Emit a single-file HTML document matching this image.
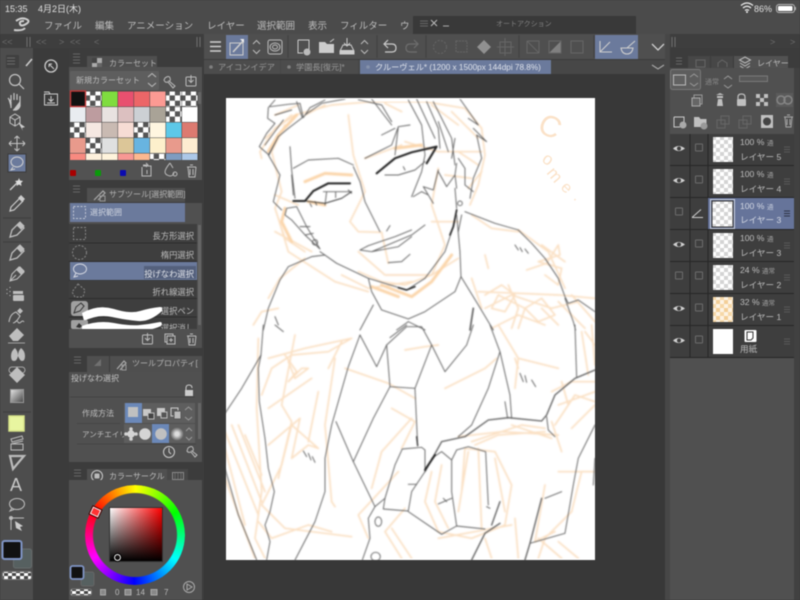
<!DOCTYPE html>
<html lang="ja"><head><meta charset="utf-8"><title>CLIP STUDIO PAINT</title>
<style>
html,body{margin:0;padding:0;width:800px;height:600px;overflow:hidden;background:#3a3a3a}
#w{position:relative;width:800px;height:600px;overflow:hidden;filter:blur(.4px)}
svg{position:absolute;left:0;top:0;font-family:"Liberation Sans","Noto Sans CJK JP",sans-serif}
.wheel{position:absolute;left:85px;top:485px;width:100px;height:100px;border-radius:50%;background:conic-gradient(from 301deg,#f00,#ff0,#0f0,#0ff,#00f,#f0f,#f00);-webkit-mask:radial-gradient(circle,transparent 41.5px,#000 42.5px);mask:radial-gradient(circle,transparent 41.5px,#000 42.5px)}
.sq{position:absolute;left:110px;top:508px;width:52px;height:53px;background:linear-gradient(to top,#000,rgba(0,0,0,0)),linear-gradient(to right,#fff,#f00);outline:1px solid #333}
.mk{position:absolute;left:91px;top:508px;width:7px;height:6px;background:#f33;border:1.5px solid #fff;outline:1px solid #400;transform:rotate(25deg)}
.cr{position:absolute;left:114px;top:554px;width:5px;height:5px;border-radius:50%;border:1px solid #fff;outline:1px solid #000}
</style></head><body><div id="w">
<svg width="800" height="600" viewBox="0 0 800 600" xmlns="http://www.w3.org/2000/svg">
<defs>
<filter id="b" x="0" y="0" width="100%" height="100%"><feGaussianBlur stdDeviation=".4"/></filter>
<filter id="b2" x="0" y="0" width="100%" height="100%"><feGaussianBlur stdDeviation=".7"/></filter>
<pattern id="c" width="10.6" height="10.6" patternUnits="userSpaceOnUse"><rect width="10.6" height="10.6" fill="#fff"/><rect width="5.3" height="5.3" fill="#555"/><rect x="5.3" y="5.3" width="5.3" height="5.3" fill="#555"/></pattern>
<pattern id="t" width="8" height="8" patternUnits="userSpaceOnUse"><rect width="8" height="8" fill="#fff"/><rect width="4" height="4" fill="#d4d4d4"/><rect x="4" y="4" width="4" height="4" fill="#d4d4d4"/></pattern>
<pattern id="o" width="8" height="8" patternUnits="userSpaceOnUse"><rect width="8" height="8" fill="#fdf3e4"/><rect width="4" height="4" fill="#f6d8a8"/><rect x="4" y="4" width="4" height="4" fill="#f3cf98"/></pattern>
<pattern id="s" width="8" height="6" patternUnits="userSpaceOnUse"><rect width="8" height="6" fill="#fff"/><rect width="4" height="3" fill="#444"/><rect x="4" y="3" width="4" height="3" fill="#444"/></pattern>
<linearGradient id="g" x1="0" y1="0" x2="1" y2="1"><stop offset="0" stop-color="#e8e8e8"/><stop offset="1" stop-color="#444"/></linearGradient>
<radialGradient id="r"><stop offset=".3" stop-color="#ddd"/><stop offset="1" stop-color="#666"/></radialGradient>
</defs>

<!-- base -->
<rect width="800" height="600" fill="#3c3c3c"/>
<rect width="800" height="34" fill="#4b4b4b"/>
<rect y="34" width="800" height="14" fill="#3e3e3e"/>
<rect y="48" width="33" height="552" fill="#4d4d4d"/>
<rect x="33" y="48" width="36" height="552" fill="#3b3b3b"/>
<rect x="204" y="74" width="461" height="526" fill="#383838"/>
<rect x="665" y="34" width="5" height="566" fill="#474747"/>

<!-- status -->
<text x="5" y="12" font-size="9" fill="#e0e0e0">15:35</text>
<text x="38" y="12" font-size="9" fill="#e0e0e0">4月2日(木)</text>
<path d="M741 5.500q6-5 12 0M743 8q4-3.500 8 0M745 10.500q2-1.500 4 0" stroke="#eee" stroke-width="1.300" fill="none"/><circle cx="747" cy="12" r="1" fill="#eee"/>
<text x="754" y="12" font-size="9" fill="#e0e0e0">86%</text>
<rect x="776.500" y="4.500" width="18" height="8" rx="2.500" fill="none" stroke="#bbb"/><rect x="778" y="6" width="14.500" height="5" rx="1" fill="#fff"/><rect x="795" y="7" width="1" height="3" fill="#aaa"/>

<!-- menu -->
<path d="M16 21q5-4 10-2t0 5q-5 3-6 0t4-3 M14 30q9 1 11-2" stroke="#d0d0d0" stroke-width="2" fill="none"/>
<g font-size="9.500" fill="#bdbdbd"><text x="44" y="29">ファイル</text><text x="95" y="29">編集</text><text x="127" y="29">アニメーション</text><text x="207" y="29">レイヤー</text><text x="257" y="29">選択範囲</text><text x="308" y="29">表示</text><text x="340" y="29">フィルター</text><text x="400" y="29">ウ</text></g>

<!-- auto action palette -->
<rect x="413" y="16" width="223" height="18" fill="#393939"/>
<path d="M420 21h8M420 23.500h8M420 26h8" stroke="#666"/>
<path d="M431 20l6 6M437 20l-6 6" stroke="#bbb" stroke-width="1"/><path d="M443 26h6" stroke="#aaa"/>
<text x="496" y="26" font-size="7" fill="#808080">オートアクション</text>

<!-- strip chevrons -->
<g font-size="9" fill="#6c6c6c"><text x="2" y="45">&lt;&lt;</text><text x="36" y="45">&lt;&lt;</text><text x="59" y="45">&gt;</text><text x="70" y="45">&lt;&lt;</text><text x="94" y="45">&lt;</text><text x="770" y="45">&gt;</text><text x="790" y="45">&gt;</text></g>
<path d="M27 37v10M30 37v10M197 37v10M200 37v10M672 37v10M675 37v10" stroke="#707070"/>

<!-- toolbar -->
<rect x="204" y="34" width="461" height="25" fill="#4f4f4f"/>
<path d="M210 42h11M210 46.500h11M210 51h11" stroke="#d0d0d0" stroke-width="1.500"/>
<rect x="226" y="35" width="22" height="24" fill="#6b7a9c"/>
<rect x="230" y="43" width="13" height="12" fill="none" stroke="#ccc"/><path d="M233 52l10-11" stroke="#ccc" stroke-width="1.600"/><path d="M240 39h4v4z" fill="#eee"/>
<path d="M253 44l3.500-3.500 3.500 3.500M253 50l3.500 3.500 3.500-3.500" stroke="#bbb" fill="none"/>
<rect x="268" y="40" width="14" height="14" rx="2" fill="none" stroke="#bbb"/><ellipse cx="275" cy="47" rx="5" ry="4" fill="none" stroke="#bbb"/><ellipse cx="275" cy="47" rx="2.500" ry="2" fill="none" stroke="#bbb"/>
<path d="M288 35v23M377 35v23M426 35v23M519 35v23M594 35v23" stroke="#3f3f3f"/>
<path d="M298 40h11v10M298 40v13h5" fill="none" stroke="#ccc"/><circle cx="307" cy="52" r="3.500" fill="#bbb"/>
<path d="M319 42h6l2 2h7v9h-15z" fill="#ccc"/><path d="M330 42l4-3" stroke="#ccc"/>
<path d="M347 38v8M344 43l3 3 3-3M340 51l3-6h8l3 6v3h-14z" fill="none" stroke="#ccc"/><rect x="340" y="50" width="14" height="4" fill="#ccc"/>
<path d="M361 44l3.500-3.500 3.500 3.500M361 50l3.500 3.500 3.500-3.500" stroke="#bbb" fill="none"/>
<path d="M385 44h7q4 0 4 4t-4 4h-7M388 40l-4 4 4 4" fill="none" stroke="#ccc" stroke-width="1.200"/>
<path d="M417 44h-7q-4 0-4 4t4 4h7M414 40l4 4-4 4" fill="none" stroke="#6e6e6e" stroke-width="1.200"/>
<g fill="none" stroke="#666"><circle cx="440" cy="47" r="6.500" stroke-dasharray="2 1.500"/><rect x="456" y="41" width="11" height="11" stroke-dasharray="2 1"/><rect x="500" y="42" width="11" height="11"/><path d="M505 38v18M497 47h17"/><path d="M527 41l12 12M527 41v12h12M527 41h12v12"/><rect x="571" y="41" width="12" height="12"/></g>
<path d="M484 40l7 7-7 7-7-7z" fill="#909090"/><path d="M549 53l12-12v12z" fill="#808080"/><rect x="549" y="41" width="12" height="12" fill="none" stroke="#666"/>
<rect x="595" y="35" width="43" height="24" fill="#6b7a9c"/>
<path d="M600 41v11h12M600 52l10-10" fill="none" stroke="#ccc" stroke-width="1.100"/>
<path d="M621 48h12q-1 6-6 6t-6-6zM627 48l8-7" fill="none" stroke="#ccc" stroke-width="1.100"/>
<path d="M652 44l6 6 6-6" fill="none" stroke="#d0d0d0" stroke-width="1.300"/>

<!-- document tabs -->
<rect x="204" y="60" width="461" height="14" fill="#474747"/>
<rect x="204" y="60" width="76" height="14" fill="#4c4c4c"/>
<rect x="281" y="60" width="77" height="14" fill="#4c4c4c"/>
<rect x="360" y="60" width="191" height="14" fill="#6b7a9c"/>
<circle cx="211" cy="67" r="1.800" fill="#808080"/><circle cx="289" cy="67" r="1.800" fill="#808080"/><circle cx="368" cy="67" r="1.800" fill="#8591ab"/>
<g font-size="8.200"><text x="218" y="70" fill="#999">アイコンイデア</text><text x="296" y="70" fill="#999">学園長[復元]*</text><text x="375" y="70" fill="#dde1ea">クルーヴェル* (1200 x 1500px 144dpi 78.8%)</text></g>
<path d="M652 65l6 4 6-4" fill="none" stroke="#aaa" stroke-width="1.100"/>

<!-- canvas -->
<rect x="226" y="98" width="369" height="462" fill="#fff"/>
<svg x="226" y="98" width="369" height="462" viewBox="226 98 369 462" style="position:static" overflow="hidden">
<g fill="none" stroke-linecap="round" stroke-linejoin="round">
<g filter="url(#b2)">
<!-- top sketch -->
<g transform="translate(225,95) scale(.3333)" stroke="#fbe0c3" stroke-width="5">
<path d="M110,190 L105,170 L150,100 L210,60 L320,30 L440,20 L600,20 L720,40 L770,100 L780,180 L760,270 L735,330"/>
<path d="M180,90 L140,170 L170,290 L150,340 L180,430 L240,470"/>
<path d="M370,60 L385,180 L420,290 L375,380 L400,410 L470,412 L490,505"/>
<path d="M640,220 L620,330 L660,450 L620,540 L540,570 L470,560 L400,530"/>
<path d="M400,470 L480,540 L620,540 L700,490"/>
<path d="M160,370 L190,470 L330,560 L430,590 M350,540 L430,580 L560,560"/>
<path d="M130,610 L165,550 L240,490 M85,690 L110,650 L160,640"/>
<path d="M740,360 L800,400 L880,410 M740,550 L770,640 M760,590 L1000,600 L1110,610"/>
<path d="M780,600 L830,570 L870,600 L840,650 L800,640 L820,600 L900,640 L950,610 L990,660 L940,680 L900,640 L880,700"/>
<path d="M850,570 L880,640 L860,700 M950,640 L1000,690 M1040,600 L1110,680 M1000,620 L1080,700 M780,640 L860,600 L980,640 L1060,620 M800,700 L880,660 L960,690"/>
<path d="M905,525 L965,505 L1000,450 L1005,480 L940,500 L1010,520 L1000,570 L960,540 M950,450 L1020,500"/>
<path d="M780,480 L790,520 M880,405 L970,470 L1020,580 M120,130 L200,60 M150,60 L220,30 M300,30 L240,60 M480,25 L530,50 M620,30 L700,90 M680,50 L760,130 M700,170 L760,210 M640,170 L770,170 M660,240 L740,250 M730,280 L770,230"/>
<path d="M150,300 L220,330 M150,410 L260,470 M620,380 L700,380 M540,140 L640,170 M420,190 L530,150"/>
</g>
<g transform="translate(225,95) scale(.3333)" stroke="#fbd6ac" stroke-width="9">
<path d="M130,170 L160,120 L215,60 M240,260 L300,235 L380,240 M510,160 L590,150 M250,320 L300,330 M180,340 L170,380 L200,440 M470,570 L560,605 L620,560 L680,480 M440,575 L520,605"/>
</g>
<!-- bottom sketch -->
<g transform="translate(225,325) scale(.3333)" stroke="#fbe0c3" stroke-width="5">
<path d="M100,40 L95,250 L110,500 L90,640 L120,700 M210,30 L170,240 L200,290 L160,460"/>
<path d="M130,100 L240,70 L380,40 L310,80 L200,90 L140,130 L110,210 M180,90 L215,140 L190,170 L230,130 L250,130 L210,160 L190,110"/>
<path d="M130,360 L225,280 L200,400 L250,360 L280,370 L200,300 L170,420 L110,540 L180,610 L380,635"/>
<path d="M0,320 L100,570 M20,300 L110,530 M40,300 L120,500 M60,330 L110,450 M0,370 L60,600 M0,460 L90,700 M130,250 L260,160 M280,200 L250,350 M310,130 L350,50"/>
<path d="M100,590 L140,640 L250,600 L320,620 M330,100 L300,300 L320,530"/>
<path d="M360,130 L490,175 L570,220 M660,190 L780,130 L815,100 M820,0 L880,100 L870,190 M880,100 L1000,130 M870,100 L880,130"/>
<path d="M540,75 L600,65 L640,60 M500,250 L570,290 L530,370 M560,280 L470,380 L440,490 M520,440 L400,570 L430,640"/>
<path d="M700,335 L830,320 L1000,330 M750,360 L820,330 L960,320 M740,350 L890,300 L960,310 M980,290 L990,320 L1010,380 M860,300 L980,340"/>
<path d="M620,440 L600,530 L640,620 L740,640 L840,600 L860,480 L810,380 L720,370 L710,500 M650,420 L630,530 L670,610 M730,380 L700,560 M760,370 L770,610 M810,400 L840,560 M640,640 L860,600"/>
<path d="M540,550 L480,620 L530,700 M500,610 L560,700 M780,640 L800,700 M870,580 L880,700 M960,480 L930,650 L990,620 M1110,440 L1070,440 L1040,560 L960,640 L940,700 M1000,650 L1060,700 M1110,200 L1000,240 M1110,240 L1040,310 M1070,20 L1090,150 M1100,0 L1110,120"/>
<path d="M980,200 L1040,170 L1110,170 M990,300 L1050,210 L1110,230 M320,530 L330,545 M940,640 L1010,700 M1080,20 L1110,60 M1010,170 L1030,240 M1000,440 L1100,440"/>
</g>
</g>
<g fill="#fbe2c8" stroke="none" font-size="20">
<text transform="translate(536,131) rotate(25)" font-size="30" font-family="Liberation Sans">C</text>
<text transform="translate(541,161) rotate(35)" font-size="17">o</text>
<text transform="translate(546,173) rotate(50)" font-size="17">m</text>
<text transform="translate(560,188) rotate(45)" font-size="16">e</text>
<text transform="translate(573,199) rotate(40)" font-size="14">.</text>
</g>
<g filter="url(#b)">
<!-- top line art -->
<g transform="translate(225,95) scale(.3333)" stroke="#626262" stroke-width="2.800">
<path d="M150,15 L130,38 L128,70 L150,85 L125,115 L103,155 L132,180 L160,125 L190,100 L232,68"/>
<path d="M135,35 L190,28 L225,25 L235,68 L255,38 L300,15 M232,68 L215,20 M240,60 L290,25 L360,12 M150,60 L200,45 M120,150 L175,75 M400,14 L470,30 L500,80"/>
<path d="M160,125 L130,180 L165,240 L145,320 L170,345 M195,155 L200,225 L210,310 M200,240 L205,300"/>
<path d="M205,220 L250,195 L340,190 L385,210 M420,190 L500,150 L520,95 L555,90 M470,120 L510,100 M520,95 L510,180"/>
<path d="M440,12 L500,90 M550,15 L590,90 L600,180 L590,230 L560,305 M575,12 L630,130 M605,20 L640,100 L645,160 M640,80 L670,170 M625,20 L680,130 L690,210"/>
<path d="M705,12 L760,90 L730,70 M745,100 L785,140 L755,120 L770,190 L745,250 L735,310 M680,190 L690,130"/>
<path d="M640,225 L625,285 L595,275 L610,300 L590,290 L565,305 M610,300 L625,325 M640,230 L665,275 L690,240 L695,280"/>
<path d="M695,205 L690,240 M700,190 L720,220 L720,270 L745,290 M690,280 L695,340"/>
<path d="M385,215 L405,260 L420,320 L465,410 M495,392 L485,408"/>
<path d="M405,465 L440,470 L500,445 L560,420 L600,390 M405,465 L430,452 L510,425 L560,405 M440,470 L520,455 L560,425 M490,503 L530,500 L555,478"/>
<path d="M285,470 L335,505 L430,550 L545,585 L600,550 L660,470 L680,410"/>
<path d="M180,360 L185,340 L215,335 L245,395 L275,445 L285,462 L240,420 L200,375 Z M225,395 L255,395 M240,420 L265,415"/>
<circle cx="270" cy="442" r="8"/><circle cx="705" cy="325" r="7"/>
<path d="M695,360 L705,470 L708,545 L690,590 L600,650 L550,672 L470,645 L440,590 L430,550"/>
<path d="M708,545 L760,630 L805,705 M550,680 L515,705 M550,680 L600,705 M445,630 L405,705"/>
<path d="M720,350 L810,385 L880,405 L920,445 L960,490 L1000,550 L1020,605 L1030,625 L1060,615 L1110,650 M1020,610 L1045,680 L1052,705"/>
<path d="M870,450 L880,465 M885,458 L892,470 M900,462 L910,475 M300,480 L260,485 L190,515 L165,555 L130,640 L115,705 M150,665 L160,690 M710,360 L700,410 M260,335 L255,325 M275,330 L270,320 M380,295 L370,285"/>
<path d="M745,640 L735,705" stroke-width="5"/>
<path d="M295,290 L380,290 M305,290 L300,330 M332,292 L332,308"/>
<path d="M480,240 L520,240 L570,225 L600,200 M535,215 L540,225"/>
</g>
<!-- thick blacks -->
<g transform="translate(225,95) scale(.3333)" stroke="#222">
<path d="M205,318 L240,318 L265,288 L310,265 L375,265" stroke-width="6"/>
<path d="M240,318 L300,325 L350,310 L380,290" stroke-width="2.500"/>
<path d="M455,235 L510,190 L560,172 L635,155 L605,205" stroke-width="6"/>
<path d="M695,345 L685,395 L675,420" stroke-width="5"/>
<path d="M520,578 L545,585 L570,575" stroke-width="4.500"/>
</g>
<!-- bottom line art -->
<g transform="translate(225,325) scale(.3333)" stroke="#626262" stroke-width="2.800">
<path d="M115,0 L108,90 L100,130 L103,230 L120,340 L130,430 L148,500 L135,560 L120,600 L135,650 L125,705"/>
<path d="M108,90 L50,190 L0,265 M0,430 L40,570 L95,705 M150,0 L175,20"/>
<path d="M405,30 L455,125 L485,60 L545,5 L590,5 L620,60 L660,140 L725,60 L745,0 M495,38 L545,0"/>
<path d="M405,30 L370,125 L340,230 L320,300 L300,400 L300,500 L270,590 L210,705"/>
<path d="M485,60 L495,185 L570,190 L620,60 M495,185 L445,280 L385,410 M570,190 L578,360"/>
<path d="M333,290 L385,410 L450,545 L480,520 M450,545 L430,580 L435,640 L412,705"/>
<ellipse cx="460" cy="590" rx="10" ry="14"/><ellipse cx="452" cy="695" rx="14" ry="13"/>
<path d="M795,0 L825,80 L855,210 L860,280 M825,80 L790,190 L740,300 L700,335 M840,230 L848,280"/>
<path d="M1050,0 L1055,155"/>
<path d="M965,275 L970,315 L990,335"/>
<path d="M475,552 L480,520 L510,420 L532,372 L590,367 L600,375 L600,440 M475,552 L550,558 L560,500 L600,440 M550,560 L650,628 L695,603 L780,612"/>
<path d="M620,400 L650,380 L680,405 L680,500 L695,603 M680,405 L695,375 L730,365 L782,380 L790,540 M640,537 L680,520 M655,520 L665,530 M785,545 L795,550 M550,478 L575,478"/>
<path d="M885,145 L895,170 M900,152 L905,172 M920,165 L932,185 M235,378 L245,395 M250,385 L258,405 M262,395 L270,412"/>
<path d="M1110,300 L1060,400 L1045,480 L1020,625 L915,655 M1110,400 L1105,480 M960,520 L1010,500"/>
<path d="M600,440 L650,350 L720,335 L790,285 L850,278 L950,288 L965,270 L990,210 L1050,160 L1110,135" stroke-width="4"/>
<path d="M950,520 L915,655 L900,705 M740,705 L780,625 L825,595 M825,530 L800,600" stroke-width="4"/>
<path d="M600,435 L630,390" stroke-width="6" stroke="#222"/><path d="M575,335 L578,362" stroke-width="4" stroke="#333"/>
</g>
</g>
</g>
</svg>

<!-- LEFT TOOLS -->
<rect x="6" y="55" width="13" height="13" fill="#404040"/><path d="M7 58h8M7 61h8M7 64h8" stroke="#6a6a6a"/>
<rect x="19" y="56" width="14" height="12" fill="#4d4d4d"/><path d="M26 66l6-7" stroke="#ccc" stroke-width="1.600"/>
<g fill="none" stroke="#c4c4c4" stroke-width="1.200">
<circle cx="15" cy="80" r="5.500"/><path d="M19 84l5 5"/>
<path d="M11 108v-6l-3-4M11 101v-6M14 100v-7M17 100v-6M20 101v-5M20 101v5q-1 3-4 4h-3" fill="#c4c4c4"/>
<path d="M10 117l5-3 5 3v6l-5 3-5-3zM10 117l5 3 5-3M15 120v6" stroke-width="1"/><path d="M18 122l7 5-3 1 1 3z" fill="#ccc" stroke="none"/>
<path d="M17 136v15M9 143.500h16M17 136l-2.500 2.500M17 136l2.500 2.500M17 151l-2.500-2.500M17 151l2.500-2.500M9 143.500l2.500-2.500M9 143.500l2.500 2.500M25 143.500l-2.500-2.500M25 143.500l-2.500 2.500" stroke-width="1"/>
</g>
<rect x="8" y="154" width="18" height="18" fill="#6b7a9c" stroke="#3b3b3b"/>
<ellipse cx="17" cy="162" rx="6" ry="5" fill="none" stroke="#d0d0d0"/><path d="M13 167l-2 3 4-1" fill="none" stroke="#d0d0d0"/>
<path d="M10 190l9-9" stroke="#ccc" stroke-width="1.300"/><path d="M19 178l1 2.500 3 .500-2 2 .500 3-2.500-1.500-2.500 1.500.5-3-2-2 3-.5z" fill="#ddd"/>
<path d="M10 211l1-4 9-9 3 3-9 9z" fill="none" stroke="#ccc" stroke-width="1.200"/><path d="M18 198l3-3 4 4-3 3z" fill="#ccc"/>
<path d="M3 218h28M3 242h28M3 412h28" stroke="#3d3d3d"/>
<g fill="#bebebe" stroke="#bebebe">
<path d="M10 237l2-7 7-7 5 5-7 7z" fill="none" stroke-width="1.300"/><path d="M17 225l3-3 4 4-3 3z"/>
<path d="M10 260l2-7 7-7 5 5-7 7z" fill="none" stroke-width="1.300"/><path d="M17 248l3-3 4 4-3 3z"/>
<path d="M10 281l2-7 7-7 5 5-7 7zM10 281l6-6" fill="none" stroke-width="1.100"/><path d="M17 270l3-3 4 4-3 3z"/>
<rect x="13" y="291" width="10" height="3" stroke="none"/><rect x="13" y="295" width="11" height="6" stroke="none" rx="1"/><path d="M10 287v1M7 289v1M10 291v1M7 293v1M10 295v1" stroke-width="1"/>
<path d="M9 322q1-8 7-10l4 4q-4 7-7 7" fill="none" stroke-width="1.100"/><path d="M17 311l3-3 3 3-3 3z" stroke="none"/><path d="M15 322q2-2 3 0t3 0 3 0" fill="none"/>
<path d="M9 336l8-8 7 7-6 6h-5z" stroke="none"/><path d="M8 343h17" stroke-width=".8"/>
<path d="M11 356q0-5 4-8 3 3 3 8-1 5-4 5-3 0-3-5zM18 356q0-5 3-8 4 3 4 8t-3 5q-2 0-4-5z" stroke="none"/>
<path d="M9 375l8-8 8 8-8 8z" stroke="none"/><rect x="9" y="367" width="16" height="6" rx="3" fill="none" stroke-width=".8"/>
</g>
<rect x="10.500" y="389.500" width="13" height="13" fill="url(#g)" stroke="#999"/>
<rect x="9" y="416" width="15" height="15" fill="#e8f5a0" stroke="#d7e38a" stroke-width="1.500"/>
<path d="M11 439l11-3 1 3-11 3zM11 444h12v6H11zM11 444l12-3" fill="none" stroke="#bbb"/>
<path d="M10 456h14l-11 13z" fill="none" stroke="#bbb" stroke-width="2.200"/>
<text x="10" y="491" font-size="18" fill="#c8c8c8">A</text>
<ellipse cx="17" cy="504" rx="7.500" ry="5.500" fill="none" stroke="#bbb" stroke-width="1.100"/><path d="M12 508l-2 3 4-1.500" fill="none" stroke="#bbb"/>
<path d="M11 518v12M11 518h13" stroke="#bbb"/><circle cx="11" cy="518" r="2" fill="#bbb"/><path d="M15 521l8 5-3 1 2 4-6-3z" fill="#ccc"/>
<rect x="13.500" y="549" width="18" height="19" rx="2" fill="#566060" stroke="#666c6c"/>
<rect x="2.500" y="541" width="19" height="18" rx="2" fill="#111" stroke="#7f94c4" stroke-width="2"/>
<rect x="2.500" y="571.500" width="29" height="8" rx="2" fill="url(#s)" stroke="#777"/>

<!-- second column icons -->
<circle cx="51" cy="66" r="6" fill="none" stroke="#ccc" stroke-width="1.300"/><path d="M49 64l5 5M49 64v3M49 64h3" stroke="#ccc"/>
<rect x="44.500" y="94" width="13" height="11" fill="none" stroke="#ccc"/><path d="M44 92h5l1 2" stroke="#ccc" fill="none"/><path d="M51 96v5M48.500 99l2.500 2.500 2.500-2.500M47 103h8" stroke="#ccc" fill="none"/>

<!-- COLOR SET -->
<rect x="69" y="48" width="133" height="20" fill="#3c3c3c"/>
<path d="M73 57h7M73 60h7M73 63h7M73 54h7" stroke="#666"/>
<rect x="87" y="56" width="70" height="12" fill="#4f4f4f"/>
<rect x="92" y="58" width="10" height="10" fill="#aaa"/><rect x="92" y="58" width="5" height="5" fill="#444"/><rect x="97" y="63" width="5" height="5" fill="#666"/>
<text x="109" y="66" font-size="8" fill="#b4b4b4">カラーセット</text>
<rect x="69" y="67" width="133" height="113" fill="#525252"/>
<rect x="70" y="71" width="89" height="19" rx="1" fill="#5e5e5e"/>
<text x="76" y="83" font-size="8" fill="#bcbcbc">新規カラーセット</text>
<path d="M148 77l4-3.500 4 3.500M148 83l4 3.500 4-3.500" fill="none" stroke="#bbb"/>
<path d="M165 78q4-3 5 0t-1 3l6 5-2 2-5-6q-3 1-4-2z" fill="none" stroke="#bbb"/>
<rect x="186" y="77" width="10" height="9" rx="1" fill="none" stroke="#bbb"/><path d="M191 75v7M188.500 80l2.500 2.500 2.500-2.500" fill="none" stroke="#bbb"/>
<rect x="69" y="91" width="130" height="69" fill="#454545"/>
<g>
<rect x="70" y="91.500" width="15.500" height="15" fill="#111"/><rect x="86" y="91.500" width="15.500" height="15" fill="url(#c)"/><rect x="102" y="91.500" width="15.500" height="15" fill="#7fdc3f"/><rect x="118" y="91.500" width="15.500" height="15" fill="#e8506f"/><rect x="134" y="91.500" width="15.500" height="15" fill="#ec6668"/><rect x="150" y="91.500" width="15.500" height="15" fill="#fc9a93"/><rect x="166" y="91.500" width="15.500" height="15" fill="url(#c)"/><rect x="182" y="91.500" width="15.500" height="15" fill="url(#c)"/>
<rect x="70" y="107" width="15.500" height="15" fill="#e9ecf0"/><rect x="86" y="107" width="15.500" height="15" fill="#bd9c9f"/><rect x="102" y="107" width="15.500" height="15" fill="#e8e2e0"/><rect x="118" y="107" width="15.500" height="15" fill="#dcc0c0"/><rect x="134" y="107" width="15.500" height="15" fill="#ccd0d4"/><rect x="150" y="107" width="15.500" height="15" fill="#a9a397"/><rect x="166" y="107" width="15.500" height="15" fill="url(#c)"/><rect x="182" y="107" width="15.500" height="15" fill="#fff"/>
<rect x="70" y="122.500" width="15.500" height="15" fill="url(#c)"/><rect x="86" y="122.500" width="15.500" height="15" fill="#f5e8e2"/><rect x="102" y="122.500" width="15.500" height="15" fill="#c9bab2"/><rect x="118" y="122.500" width="15.500" height="15" fill="#f7dcd4"/><rect x="134" y="122.500" width="15.500" height="15" fill="url(#c)"/><rect x="150" y="122.500" width="15.500" height="15" fill="#fff6e0"/><rect x="166" y="122.500" width="15.500" height="15" fill="#5dc8e8"/><rect x="182" y="122.500" width="15.500" height="15" fill="#dc7a70"/>
<rect x="70" y="138" width="15.500" height="15" fill="#e89a8c"/><rect x="86" y="138" width="15.500" height="15" fill="url(#c)"/><rect x="102" y="138" width="15.500" height="15" fill="#dfe0e0"/><rect x="118" y="138" width="15.500" height="15" fill="#dcc698"/><rect x="134" y="138" width="15.500" height="15" fill="#68b4e0"/><rect x="150" y="138" width="15.500" height="15" fill="#fdf0cc"/><rect x="166" y="138" width="15.500" height="15" fill="#e89a8c"/><rect x="182" y="138" width="15.500" height="15" fill="#fdecd0"/>
<rect x="70" y="153.500" width="15.500" height="6.500" fill="#f88a80"/><rect x="86" y="153.500" width="15.500" height="6.500" fill="#fdf0dc"/><rect x="102" y="153.500" width="15.500" height="6.500" fill="#fff4dc"/><rect x="118" y="153.500" width="15.500" height="6.500" fill="#f89894"/><rect x="134" y="153.500" width="15.500" height="6.500" fill="#fcb890"/><rect x="150" y="153.500" width="15.500" height="6.500" fill="url(#c)"/><rect x="166" y="153.500" width="15.500" height="6.500" fill="#7f9cc0"/><rect x="182" y="153.500" width="15.500" height="6.500" fill="#acc8e8"/>
</g>
<rect x="70.500" y="91" width="15" height="15.500" fill="none" stroke="#c23a3a" stroke-width="1.400"/>
<rect x="198" y="92" width="3" height="12" fill="#666"/>
<rect x="70" y="170" width="6" height="6" rx="1" fill="#a80000"/><rect x="95" y="170" width="6" height="6" rx="1" fill="#0a9a0a"/><rect x="120" y="170" width="6" height="6" rx="1" fill="#0a0ab0"/>
<g fill="none" stroke="#bbb" stroke-width="1"><path d="M143 166h8v10h-9v-9M146 163l2 2-2 2M143 165h4M147 170v4"/><path d="M170 163q-5 6-5 9t5 4q3 0 4-3M170 163l3 5"/><circle cx="175" cy="174" r="2"/><path d="M187 167h9M188 167l1 10h6l1-10M190 165h3M190 169v6M193 169v6"/></g>

<!-- SUB TOOL -->
<rect x="69" y="180" width="133" height="23" fill="#3c3c3c"/>
<path d="M73 186h7M73 189h7M73 192h7" stroke="#666"/>
<rect x="87" y="188" width="98" height="14" fill="#4f4f4f"/>
<path d="M94 200l9-9 2 2-7 7" fill="none" stroke="#aaa" stroke-width="1.200"/><rect x="100" y="196" width="5" height="5" fill="none" stroke="#999"/>
<text x="109" y="197" font-size="8" fill="#b4b4b4">サブツール[選択範囲]</text>
<rect x="69" y="203" width="133" height="145" fill="#505050"/>
<rect x="70" y="203" width="115" height="19" fill="#6b7a9c"/>
<rect x="73.500" y="206.500" width="12" height="12" fill="none" stroke="#c0c6d4" stroke-dasharray="2 1.500"/>
<text x="90" y="215" font-size="8" fill="#d0d5e0">選択範囲</text>
<rect x="69" y="224" width="128" height="105" fill="#3e3e3e"/>
<path d="M69 243h128M69 261.500h128M69 280h128M69 298.500h128M69 317h128" stroke="#2d2d2d"/>
<rect x="198" y="225" width="3" height="100" fill="#666"/>
<rect x="70" y="262" width="127" height="18" fill="#6b7a9c"/>
<rect x="144" y="266" width="52" height="13" fill="#54607c"/>
<rect x="73.500" y="227.500" width="12" height="12" fill="none" stroke="#888" stroke-dasharray="2 1.500"/>
<circle cx="79.500" cy="252.500" r="7" fill="none" stroke="#888" stroke-dasharray="2 1.500"/>
<ellipse cx="80" cy="269" rx="6.500" ry="5" fill="none" stroke="#d5d8e2"/><path d="M76 273l-2 4 4-1" fill="none" stroke="#d5d8e2"/>
<path d="M78 284l7 6-2 7h-8l-3-5z" fill="none" stroke="#888" stroke-dasharray="2 1.500"/>
<g font-size="8.300" fill="#bcbcbc" text-anchor="end"><text x="194" y="239">長方形選択</text><text x="194" y="258">楕円選択</text><text x="194" y="277" fill="#e0e3ea">投げなわ選択</text><text x="194" y="295">折れ線選択</text><text x="194" y="314">選択ペン</text><text x="194" y="331">選択消し</text></g>
<rect x="71" y="301" width="17" height="15" rx="3" fill="#a0a0a0"/><path d="M74 313l2-6 5-4 3 3-4 5z" fill="none" stroke="#333"/>
<path d="M82 313q16-9 32-4t26 2 20-4q3 0 2 4-12 11-24 10t-26-4-28 4z" fill="#fff"/>
<rect x="71" y="320" width="17" height="9" rx="2" fill="#a0a0a0"/><path d="M76 327l3-4 3 3-2 2" fill="#333"/>
<path d="M82 326q16-6 32-3t26 2 20-3q3 0 1 4-7 3-10 3h-69z" fill="#fff"/>
<rect x="69" y="329" width="133" height="19" fill="#505050"/>
<g fill="none" stroke="#bbb" stroke-width="1">
<rect x="142.500" y="335" width="10" height="9" rx="1"/><path d="M147.500 333v7M145 338l2.500 2.500 2.500-2.500"/>
<rect x="165" y="334" width="8" height="8"/><rect x="167" y="336" width="8" height="8" fill="#505050"/><path d="M171 338v4M169 340h4"/>
<path d="M187 336h9M188 336l1 9h6l1-9M190 334h3M190 338v5M193 338v5"/></g>

<!-- TOOL PROPERTY -->
<rect x="69" y="348" width="133" height="24" fill="#3c3c3c"/>
<path d="M74 357h7M74 360h7M74 363h7" stroke="#666"/>
<rect x="87" y="356" width="22" height="16" fill="#4f4f4f"/><path d="M94 366l7-7v7z" fill="#707070"/>
<rect x="110" y="356" width="92" height="16" fill="#4f4f4f"/>
<path d="M117 369l7-8 2 2-6 7" fill="none" stroke="#aaa" stroke-width="1.200"/><rect x="122" y="365" width="4" height="5" fill="none" stroke="#999"/>
<text x="132" y="366" font-size="8" fill="#b4b4b4">ツールプロパティ[</text>
<rect x="69" y="372" width="133" height="90" fill="#505050"/>
<text x="71" y="381" font-size="8" fill="#c4c4c4">投げなわ選択</text>
<path d="M186 390v-2q0-3 3-3t3 3" fill="none" stroke="#ccc"/><rect x="185" y="390" width="8" height="6" fill="#ccc"/>
<path d="M70 397h125" stroke="#444"/>
<path d="M77 423.500h43M77 444h119" stroke="#454545"/>
<text x="82" y="416" font-size="8" fill="#bcbcbc">作成方法</text>
<text x="82" y="437" font-size="7.500" fill="#bcbcbc">アンチエイリ</text>
<rect x="124" y="403" width="71" height="20" fill="#5e5e5e"/><rect x="124" y="424" width="71" height="19" fill="#5e5e5e"/>
<rect x="125" y="403" width="17" height="20" fill="#6b88b8"/><rect x="128" y="407" width="10" height="10" fill="#c0c0c0"/>
<g fill="#c8c8c8"><rect x="143" y="409" width="8" height="7"/><rect x="148" y="413" width="6" height="6" fill="#444" stroke="#bbb"/><rect x="157" y="408" width="8" height="8"/><rect x="161" y="412" width="6" height="6" fill="#555" stroke="#bbb"/></g>
<rect x="171" y="408" width="7" height="8" fill="none" stroke="#ccc"/><rect x="174" y="411" width="7" height="8" fill="#bbb" stroke="#555"/>
<path d="M185 410l3.500-3 3.500 3M185 417l3.500 3 3.500-3M186 431l3-3 3 3M186 437l3 3 3-3" fill="none" stroke="#999"/>
<rect x="152" y="424" width="17" height="19" fill="#6b88b8"/>
<g fill="#d4d4d4"><circle cx="131" cy="434" r="3.800"/><circle cx="131" cy="429" r="1.800"/><circle cx="131" cy="439" r="1.800"/><circle cx="126" cy="434" r="1.800"/><circle cx="136" cy="434" r="1.800"/></g>
<circle cx="145" cy="434" r="5.800" fill="#d4d4d4"/><circle cx="161" cy="434" r="5.800" fill="#c0c0c0"/>
<circle cx="177" cy="434" r="6.500" fill="url(#r)"/>
<rect x="198" y="403" width="3" height="36" fill="#666"/>
<circle cx="169" cy="452" r="5.500" fill="none" stroke="#ccc"/><path d="M169 448v4l2 2" fill="none" stroke="#ccc"/>
<path d="M188 448q4-3 5 0t-1 3l5 4-2 2-4-5q-3 1-4-1z" fill="none" stroke="#bbb"/>

<!-- COLOR CIRCLE -->
<rect x="69" y="462" width="133" height="18" fill="#3c3c3c"/>
<path d="M74 470h7M74 473h7M74 476h7" stroke="#666"/>
<rect x="87" y="469" width="80" height="12" fill="#505050"/><rect x="167" y="469" width="21" height="11" fill="#474747"/>
<circle cx="97" cy="476" r="5.500" fill="none" stroke="#ccc"/><rect x="94.500" y="473.500" width="5" height="5" rx="1" fill="#bbb"/>
<text x="109" y="479" font-size="8" fill="#bcbcbc">カラーサークル</text>
<rect x="172.500" y="472.500" width="11" height="7" fill="none" stroke="#888"/><path d="M175 473v6M178 473v6M181 473v6" stroke="#777" stroke-width=".7"/>
<rect x="69" y="480" width="133" height="120" fill="#505050"/>
<rect x="81" y="572" width="13" height="14" rx="2" fill="#566060" stroke="#666"/>
<rect x="70.500" y="566" width="13" height="13" rx="2" fill="#111" stroke="#7f94c4" stroke-width="1.800"/>
<rect x="70.500" y="589" width="21" height="6.500" rx="2" fill="url(#s)" stroke="#777"/>
<rect x="100.500" y="589.500" width="5" height="5.500" fill="#888" stroke="#aaa"/>
<rect x="125" y="589.500" width="6" height="5.500" fill="#888" stroke="#aaa"/>
<rect x="151" y="589.500" width="6" height="5.500" fill="#888" stroke="#aaa"/>
<g font-size="8" fill="#bcbcbc"><text x="115" y="595">0</text><text x="136" y="595">14</text><text x="164" y="595">7</text></g>
<circle cx="189" cy="587" r="5.500" fill="none" stroke="#aaa"/><path d="M187 584l5 3-5 3z" fill="none" stroke="#aaa"/>

<!-- RIGHT PANEL -->
<rect x="670" y="48" width="130" height="20" fill="#3c3c3c"/>
<path d="M676 58h6M676 61h6M676 64h6" stroke="#666"/>
<rect x="688" y="56" width="22" height="12" fill="#474747"/><rect x="711" y="56" width="22" height="12" fill="#474747"/><rect x="734" y="56" width="54" height="12" fill="#525252"/>
<rect x="696" y="60" width="9" height="7" fill="none" stroke="#666"/><path d="M718 67v-4l4-3 5 3v4" fill="none" stroke="#666"/>
<path d="M745 57l5.500 3-5.500 3-5.500-3zM740 63l5 3 5-3M740 66l5 3 5-3" fill="none" stroke="#bbb"/>
<text x="757" y="66" font-size="8" fill="#bcbcbc">レイヤー</text>
<rect x="670" y="68" width="124" height="66" fill="#505050"/>
<rect x="670" y="134" width="124" height="224" fill="#3e3e3e"/>
<rect x="670" y="358" width="124" height="242" fill="#505050"/>
<rect x="794" y="68" width="6" height="532" fill="#414141"/>
<rect x="670.500" y="69.500" width="30" height="20" rx="2" fill="#5d5d5d" stroke="#777"/>
<rect x="673.500" y="75" width="12" height="10" fill="#616161" stroke="#bbb"/>
<path d="M690 77l4-3 4 3M690 83l4 3 4-3M724 79l4-3 4 3M724 85l4 3 4-3" fill="none" stroke="#999"/>
<text x="705" y="84" font-size="7" fill="#888">通常</text>
<rect x="739.500" y="76" width="28" height="5.500" fill="#595959" stroke="#7a7a7a"/>
<g fill="#c0c0c0" stroke="none">
<rect x="694" y="95" width="8" height="9" fill="none" stroke="#999"/><rect x="692" y="98" width="8" height="8" fill="#666" stroke="#aaa"/>
<path d="M716 95h8l-4-2zM717 96h6v2h-6zM718 99h4l1 7h-6zM713 96h2M725 96h2"/>
<rect x="737" y="99" width="9" height="7" rx="1"/><path d="M738 99v-2q0-3 3.500-3t3.500 3v2" fill="none" stroke="#c0c0c0" stroke-width="1.200"/>
<rect x="756" y="94" width="4" height="4"/><rect x="764" y="94" width="4" height="4"/><rect x="760" y="98" width="4" height="4"/><rect x="756" y="102" width="4" height="4"/><rect x="764" y="102" width="4" height="4"/>
</g>
<rect x="776" y="93" width="17" height="14" fill="#5b5b5b"/><circle cx="781" cy="100" r="4" fill="none" stroke="#858585" stroke-width="1.500"/><circle cx="788" cy="100" r="4" fill="none" stroke="#858585" stroke-width="1.500"/>
<path d="M674 117h10v8M674 117v10h6" fill="none" stroke="#ccc"/><circle cx="683" cy="125" r="3.500" fill="#aaa"/>
<path d="M694 117h5l1.500 2h6v8h-12.500z" fill="#c0c0c0"/><circle cx="704" cy="126" r="3.500" fill="#999"/>
<g fill="none" stroke="#666"><rect x="721" y="116" width="8" height="8"/><rect x="717" y="120" width="8" height="8"/><rect x="743" y="116" width="8" height="8"/><rect x="739" y="120" width="8" height="8"/></g>
<rect x="761" y="115" width="12" height="13" fill="#c0c0c0"/><circle cx="767" cy="121.500" r="4" fill="#444"/>
<path d="M784 117h9M785 117l1 10h5l1-10M787 115h3M787 119v6M790 119v6" fill="none" stroke="#a8a8a8"/>
<path d="M670 165.500h124M670 197.500h124M670 229.500h124M670 261.500h124M670 293.500h124M670 325.500h124M670 357.500h124M690 134v224M708 134v224" stroke="#262626"/>
<rect x="708" y="198" width="86" height="31" fill="#66749a"/>
<g fill="none" stroke="#6c6c6c"><rect x="695.500" y="144" width="7" height="7" rx=".5"/><rect x="695.500" y="176" width="7" height="7" rx=".5"/><rect x="675.500" y="208" width="7" height="7" rx=".5"/><rect x="695.500" y="240" width="7" height="7" rx=".5"/><rect x="675.500" y="272" width="7" height="7" rx=".5"/><rect x="695.500" y="272" width="7" height="7" rx=".5"/><rect x="695.500" y="304" width="7" height="7" rx=".5"/><rect x="695.500" y="336" width="7" height="7" rx=".5"/></g>
<g><path d="M673 148.500q5.500-5 12 0q-6.500 5-12 0z" fill="#d0d0d0"/><circle cx="679" cy="148.500" r="2" fill="#3e3e3e"/>
<path d="M673 180.500q5.500-5 12 0q-6.500 5-12 0z" fill="#d0d0d0"/><circle cx="679" cy="180.500" r="2" fill="#3e3e3e"/>
<path d="M673 244.500q5.500-5 12 0q-6.500 5-12 0z" fill="#d0d0d0"/><circle cx="679" cy="244.500" r="2" fill="#3e3e3e"/>
<path d="M673 308.500q5.500-5 12 0q-6.500 5-12 0z" fill="#d0d0d0"/><circle cx="679" cy="308.500" r="2" fill="#3e3e3e"/>
<path d="M673 340.500q5.500-5 12 0q-6.500 5-12 0z" fill="#d0d0d0"/><circle cx="679" cy="340.500" r="2" fill="#3e3e3e"/></g>
<path d="M692 217.500l9-8M692 217.500h11" stroke="#ccc" fill="none"/>
<rect x="713" y="137" width="20" height="25" fill="url(#t)"/><rect x="713" y="169" width="20" height="25" fill="url(#t)"/>
<rect x="710.500" y="199.500" width="24" height="29" fill="none" stroke="#c8cedc"/><rect x="712" y="201" width="21" height="26" fill="url(#t)" stroke="#333"/>
<rect x="713" y="233" width="20" height="25" fill="url(#t)"/><rect x="713" y="265" width="20" height="25" fill="url(#t)"/><rect x="713" y="297" width="20" height="25" fill="url(#o)"/><rect x="713" y="329" width="20" height="25" fill="#fff"/>
<g font-size="8.600" fill="#bebebe">
<text x="740" y="145">100 %</text><text x="740" y="160">レイヤー 5</text>
<text x="740" y="177">100 %</text><text x="740" y="192">レイヤー 4</text>
<text x="740" y="209" fill="#d4d9e4">100 %</text><text x="740" y="223" fill="#d4d9e4">レイヤー 3</text>
<text x="740" y="241">100 %</text><text x="740" y="256">レイヤー 3</text>
<text x="740" y="273">24 %</text><text x="740" y="288">レイヤー 2</text>
<text x="740" y="305">32 %</text><text x="740" y="320">レイヤー 1</text>
<text x="740" y="352">用紙</text>
</g>
<g font-size="6.500" fill="#a0a0a0"><text x="767" y="145">通</text><text x="767" y="177">通</text><text x="767" y="209" fill="#c0c8d8">通</text><text x="767" y="241">通</text><text x="762" y="273">通常</text><text x="762" y="305">通常</text></g>
<rect x="744.500" y="330" width="12" height="12" rx="1" fill="#fff"/><path d="M747 332h6v6l-2 2h-4z" fill="none" stroke="#333"/>
<g stroke="#5a5a5a"><path d="M784 147h6M784 149.500h6M784 152h6M784 179h6M784 181.500h6M784 184h6M784 243h6M784 245.500h6M784 248h6M784 275h6M784 277.500h6M784 280h6M784 307h6M784 309.500h6M784 312h6M784 339h6M784 341.500h6M784 344h6"/></g>
<path d="M784 211h6M784 213.500h6M784 216h6" stroke="#2e3345"/>
</svg>
<div class="wheel"></div>
<div class="sq"></div>
<div class="mk"></div>
<div class="cr"></div>
</div></body></html>
